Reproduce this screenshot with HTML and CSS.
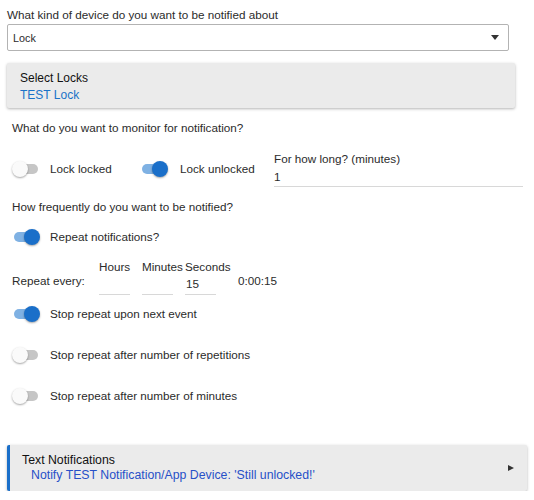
FILE: index.html
```html
<!DOCTYPE html>
<html>
<head>
<meta charset="utf-8">
<link rel="stylesheet" href="styles.css">
</head>
<body>
<div class="page">
  <div class="field">
    <div class="label">What kind of device do you want to be notified about</div>
    <div class="select"><span>Lock</span><span class="caret"></span></div>
  </div>

  <div class="card">
    <div class="card-title">Select Locks</div>
    <div class="card-link">TEST Lock</div>
  </div>

  <div class="q q1">What do you want to monitor for notification?</div>

  <div class="row monitor">
    <label class="sw w1"><span class="toggle"><span class="track"></span><span class="knob"></span></span><span class="sw-text">Lock locked</span></label>
    <label class="sw w2"><span class="toggle on"><span class="track"></span><span class="knob"></span></span><span class="sw-text">Lock unlocked</span></label>
    <div class="howlong">
      <div class="hl-label">For how long? (minutes)</div>
      <div class="hl-input">1</div>
    </div>
  </div>

  <div class="q q2">How frequently do you want to be notified?</div>

  <label class="sw line l1"><span class="toggle on"><span class="track"></span><span class="knob"></span></span><span class="sw-text">Repeat notifications?</span></label>

  <div class="repeat">
    <span class="rp-label">Repeat every:</span>
    <div class="tbox"><div class="t-label">Hours</div><div class="t-input"></div></div>
    <div class="tbox"><div class="t-label">Minutes</div><div class="t-input"></div></div>
    <div class="tbox"><div class="t-label">Seconds</div><div class="t-input">15</div></div>
    <span class="total">0:00:15</span>
  </div>

  <label class="sw line l2"><span class="toggle on"><span class="track"></span><span class="knob"></span></span><span class="sw-text">Stop repeat upon next event</span></label>
  <label class="sw line l3"><span class="toggle"><span class="track"></span><span class="knob"></span></span><span class="sw-text">Stop repeat after number of repetitions</span></label>
  <label class="sw line l4"><span class="toggle"><span class="track"></span><span class="knob"></span></span><span class="sw-text">Stop repeat after number of minutes</span></label>

  <div class="card card2">
    <div class="card-title">Text Notifications</div>
    <div class="card-link2">Notify TEST Notification/App Device: 'Still unlocked!'</div>
    <span class="arrow"></span>
  </div>
</div>
</body>
</html>
```

FILE: styles.css
```css
* { box-sizing: border-box; }
html, body { margin: 0; padding: 0; background: #fff; }
body {
  font-family: "Liberation Sans", Arial, sans-serif;
  font-size: 11.7px;
  color: #2b2b2b;
}
.page { padding: 7px 0 0 7px; width: 534px; }

.label { line-height: 16px; }
.select {
  margin-top: 1px;
  width: 502px;
  height: 27px;
  border: 1px solid #b3b3b3;
  border-radius: 2px;
  display: flex;
  align-items: center;
  justify-content: space-between;
  padding: 0 9px 0 5px;
  font-size: 10.8px;
}
.caret {
  width: 0; height: 0;
  border-left: 4px solid transparent;
  border-right: 4px solid transparent;
  border-top: 5px solid #333;
}

.card {
  margin-top: 12px;
  width: 508px;
  background: #ebebeb;
  border-radius: 2px;
  box-shadow: 0 1px 3px rgba(0,0,0,0.3);
  padding: 7px 13px 4px;
  position: relative;
  font-size: 12px;
}
.card-title { line-height: 16px; color: #111; }
.card-link { line-height: 18px; color: #1a73c8; }

.q { padding-left: 5px; line-height: 16px; }
.q1 { margin-top: 12px; }

.row { display: flex; align-items: flex-start; }
.monitor { margin-top: 13px; padding-left: 5px; }

.sw { display: flex; align-items: center; }
.toggle { position: relative; width: 27px; height: 20px; flex: none; }
.track {
  position: absolute; left: 2px; top: 5px;
  width: 24px; height: 10px; border-radius: 5px;
  background: #c6c6c6;
}
.knob {
  position: absolute; left: 0; top: 2px;
  width: 16px; height: 16px; border-radius: 50%;
  background: #fafafa;
  box-shadow: 0 1px 2px rgba(0,0,0,0.35);
}
.toggle.on .track { background: #7fb1e3; }
.toggle.on .knob { left: 12px; background: #1a6fc9; }
.sw-text { margin-left: 11px; line-height: 16px; }

.monitor .sw { margin-top: 10px; width: 130px; }
.w2 { margin-left: -2px; }
.w2 .sw-text { margin-left: 13px; }
.howlong { margin-left: 4px; margin-top: 2px; width: 249px; }
.hl-label { line-height: 16px; }
.hl-input {
  height: 20px;
  padding-top: 2px;
  line-height: 16px;
  border-bottom: 1px solid #d8d8d8;
}

.q2 { margin-top: 12px; }

.line { padding-left: 5px; }
.l1 { margin-top: 12px; }

.repeat {
  display: flex;
  align-items: center;
  padding-left: 5px;
  margin-top: 12px;
}
.rp-label { width: 87px; padding-top: 6px; }
.tbox { width: 31px; margin-right: 12px; }
.tbox:nth-of-type(3) { margin-right: 0; }
.t-label { line-height: 16px; white-space: nowrap; }
.t-input { height: 20px; padding-top: 1px; line-height: 16px; border-bottom: 1px solid #d8d8d8; padding-left: 1px; }
.total { margin-left: 22px; padding-top: 6px; }

.l2 { margin-top: 9px; }
.l3 { margin-top: 21px; }
.l4 { margin-top: 21px; }

.card2 {
  margin-top: 39px;
  width: 520px;
  border-left: 3px solid #1a6fc9;
  padding: 8px 13px 8px 12px;
  font-size: 12.3px;
}
.card2 .card-title { line-height: 15px; }
.card-link2 { color: #2750c8; line-height: 15px; padding-left: 9px; }
.arrow {
  position: absolute; right: 13px; top: 20px;
  width: 0; height: 0;
  border-top: 3.5px solid transparent;
  border-bottom: 3.5px solid transparent;
  border-left: 6px solid #333;
}
```
